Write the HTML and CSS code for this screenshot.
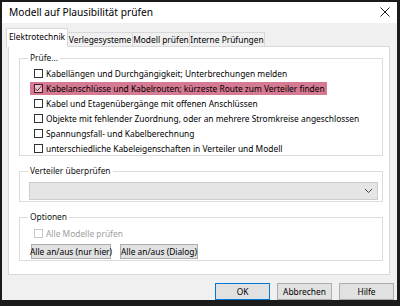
FILE: index.html
```html
<!DOCTYPE html>
<html lang="de">
<head>
<meta charset="utf-8">
<link rel="stylesheet" href="styles.css">
</head>
<body>
<div class="window">
  <div class="titlebar">
    <span class="title">Modell auf Plausibilität prüfen</span>
    <svg class="close" width="12" height="12" viewBox="0 0 12 12"><path d="M1.5 1.5 L10.5 10.5 M10.5 1.5 L1.5 10.5" stroke="#222" stroke-width="1"/></svg>
  </div>
  <div class="content">
    <div class="tabs">
      <div class="tab active w1">Elektrotechnik</div>
      <div class="tab w2">Verlegesysteme</div>
      <div class="tab w3">Modell prüfen</div>
      <div class="tab w4">Interne Prüfungen</div>
    </div>
    <div class="panel">
      <fieldset class="group g1">
        <legend>Prüfe...</legend>
        <div class="row"><span class="cb"></span><span>Kabellängen und Durchgängigkeit; Unterbrechungen melden</span></div>
        <div class="row hl"><span class="cb checked"><svg width="9" height="9" viewBox="0 0 9 9"><path d="M1.3 4.6 L3.4 6.8 L7.8 1.6" fill="none" stroke="#6b1f33" stroke-width="1"/></svg></span><span>Kabelanschlüsse und Kabelrouten; kürzeste Route zum Verteiler finden</span></div>
        <div class="row"><span class="cb"></span><span>Kabel und Etagenübergänge mit offenen Anschlüssen</span></div>
        <div class="row"><span class="cb"></span><span>Objekte mit fehlender Zuordnung, oder an mehrere Stromkreise angeschlossen</span></div>
        <div class="row"><span class="cb"></span><span>Spannungsfall- und Kabelberechnung</span></div>
        <div class="row"><span class="cb"></span><span>unterschiedliche Kabeleigenschaften in Verteiler und Modell</span></div>
      </fieldset>
      <fieldset class="group g2">
        <legend>Verteiler überprüfen</legend>
        <div class="select">
          <svg width="9" height="6" viewBox="0 0 9 6"><path d="M1 1 L4.5 4.5 L8 1" fill="none" stroke="#444" stroke-width="1"/></svg>
        </div>
      </fieldset>
      <fieldset class="group g3">
        <legend>Optionen</legend>
        <div class="row disabled"><span class="cb"></span><span>Alle Modelle prüfen</span></div>
        <div class="btnrow">
          <div class="btn b1">Alle an/aus (nur hier)</div>
          <div class="btn b2">Alle an/aus (Dialog)</div>
        </div>
      </fieldset>
    </div>
    <div class="footer">
      <div class="btn dlg default">OK</div>
      <div class="btn dlg">Abbrechen</div>
      <div class="btn dlg">Hilfe</div>
    </div>
  </div>
</div>
</body>
</html>
```
FILE: styles.css
```css
* { box-sizing: border-box; }
html, body { margin: 0; padding: 0; }
body {
  width: 400px;
  height: 306px;
  background: #1b1b1b;
  padding: 2px 3px 0 2px;
  font-family: "Noto Sans", "Segoe UI", sans-serif;
  font-size: 8.4px;
  color: #000;
  overflow: hidden;
}
.window {
  width: 395px;
  height: 298px;
  background: #f0f0f0;
  display: flex;
  flex-direction: column;
}
.titlebar {
  height: 23px;
  background: #fff;
  display: flex;
  align-items: center;
  justify-content: space-between;
  padding: 0 6px 1px 7px;
}
.title {
  font-size: 10.2px;
  color: #000;
}
.close { margin-top: -1px; }
.content {
  flex: 1;
  display: flex;
  flex-direction: column;
}
.tabs {
  display: flex;
  align-items: flex-end;
  height: 20px;
  margin-left: 4px;
  margin-top: 3px;
  position: relative;
  z-index: 1;
}
.tab {
  height: 14px;
  background: #f0f0f0;
  border: 1px solid #d9d9d9;
  border-bottom: none;
  margin-left: -1px;
  display: flex;
  align-items: center;
  justify-content: center;
  white-space: nowrap;
  margin-bottom: 0;
}
.tab.active {
  height: 18px;
  background: #fff;
  margin-left: 0;
  margin-bottom: -1px;
  height: 19px;
  padding-bottom: 3px;
}
.w1 { width: 62px; }
.w2 { width: 66px; }
.w3 { width: 58px; }
.w4 { width: 76px; }
.panel {
  margin-left: 6px;
  width: 382px;
  height: 229px;
  background: #fff;
  border: 1px solid #d9d9d9;
  padding: 5px 6px 0 10px;
}
.group {
  margin: 0;
  border: 1px solid #dcdcdc;
  padding: 0 5px;
  min-width: 0;
}
.group legend {
  padding: 0 2px;
  margin-left: 3px;
  line-height: 12px;
  color: #111;
}
.g1 { height: 104px; padding-top: 2px; }
.g2 { height: 37px; margin-top: 9px; padding-top: 5px; padding-right: 4px; }
.g3 { height: 50px; margin-top: 9px; padding-top: 3px; }
.row {
  display: flex;
  align-items: center;
  width: fit-content;
  height: 15px;
  margin-left: 5px;
  padding: 0 2px 0 4px;
  white-space: nowrap;
}
.row.hl {
  background: #d57a92;
  height: 13px;
  margin: 1px 0 1px 5px;
}
.cb {
  width: 9px;
  height: 9px;
  border: 1px solid #333;
  background: #fff;
  margin-right: 3px;
  flex: none;
  display: flex;
}
.cb.checked { background: #e8c3cd; border-color: #4a1a26; }
.cb svg { margin: -1px; }
.disabled { color: #a0a0a0; }
.disabled .cb { border-color: #c8c8c8; }
.select {
  height: 18px;
  margin-left: 4px;
  background: #e5e5e5;
  border: 1px solid #cccccc;
  display: flex;
  align-items: center;
  justify-content: flex-end;
  padding-right: 4px;
}
.btnrow {
  display: flex;
  gap: 9px;
  margin-top: 3px;
  margin-left: 6px;
}
.btn {
  height: 15px;
  background: #e1e1e1;
  border: 1px solid #adadad;
  display: flex;
  align-items: center;
  justify-content: center;
  white-space: nowrap;
}
.b1 { width: 80px; }
.b2 { width: 78px; }
.footer {
  display: flex;
  justify-content: flex-end;
  gap: 7px;
  margin-top: 8px;
  padding-right: 3px;
}
.dlg { width: 55px; height: 17px; }
.dlg.default { border: 1px solid #0078d7; }
```
